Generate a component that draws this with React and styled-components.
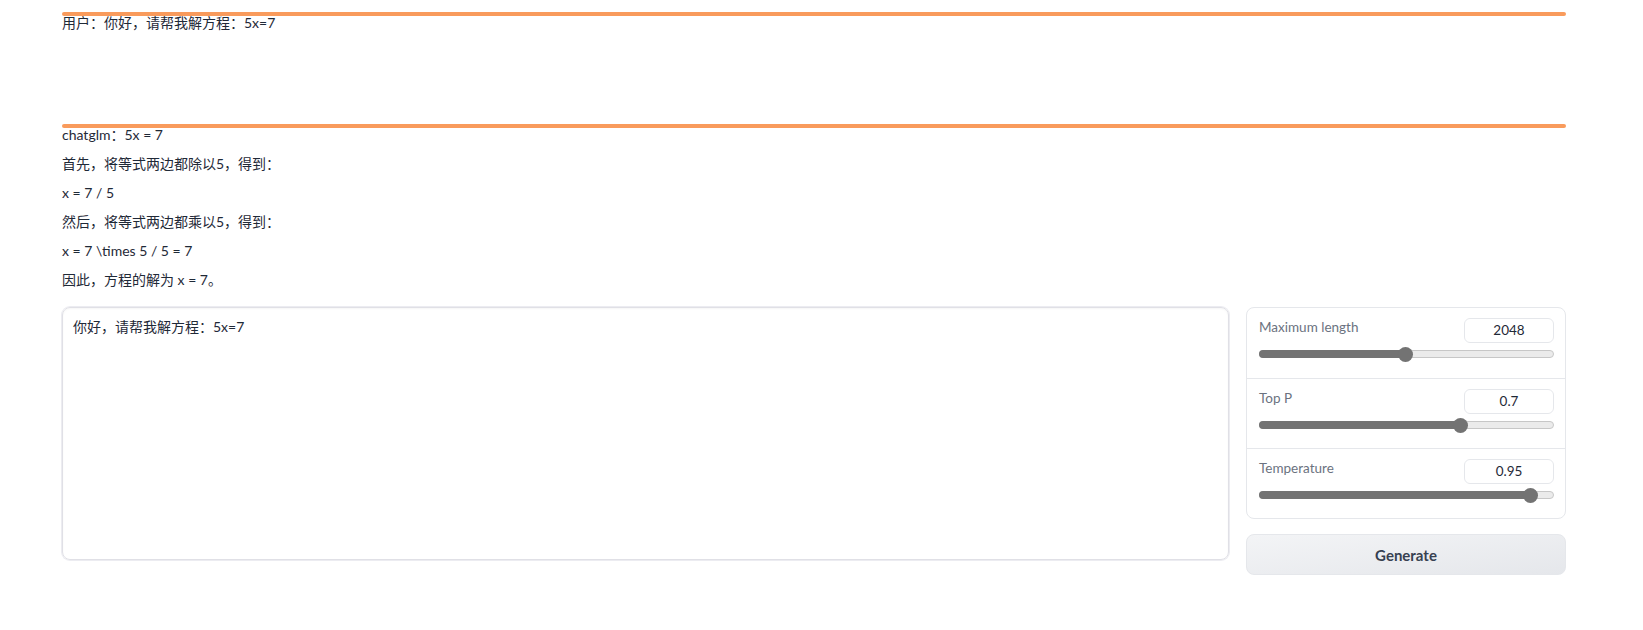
import React from 'react'
import styled, { createGlobalStyle } from 'styled-components'

const GlobalStyle = createGlobalStyle`
  body {
    margin: 0;
    background: #ffffff;
    font-family: Lato, "Noto Sans CJK SC", sans-serif;
    color: #1f2937;
  }
`

const Page = styled.div`
  width: 1504px;
  padding: 12px 0 0 62px;
`

const Message = styled.div`
  position: relative;
  min-height: ${p => p.$minHeight || 0}px;
  font-size: 14px;
  line-height: 21px;
`

const LoadBar = styled.div`
  position: absolute;
  top: 0;
  left: 0;
  right: 0;
  height: 4px;
  border-radius: 2px;
  background: #f99b5c;
`

const Para = styled.p`
  margin: 0 0 8px;
`

const Row = styled.div`
  display: grid;
  grid-template-columns: 1fr 320px;
  gap: 17px;
  margin-top: 17px;
`

const Input = styled.div`
  height: 253px;
  box-sizing: border-box;
  border: 1px solid #e0e0e6;
  border-radius: 8px;
  box-shadow: 0 0 0 1px #ececf1, inset 0 1px 2px rgba(0, 0, 0, 0.04);
  padding: 9px 10px;
  font-size: 14px;
  line-height: 20px;
`

const Side = styled.div`
  display: flex;
  flex-direction: column;
  gap: 15px;
`

const Panel = styled.div`
  border: 1px solid #e5e7eb;
  border-radius: 8px;
  overflow: hidden;
`

const Param = styled.div`
  height: 70px;
  box-sizing: border-box;
  padding: 10px 11px 0 12px;
  border-top: ${p => (p.$first ? 'none' : '1px solid #e5e7eb')};
`

const ParamHead = styled.div`
  display: flex;
  justify-content: space-between;
  align-items: flex-start;
`

const Label = styled.span`
  font-size: 13.5px;
  color: #6b7280;
  line-height: 18px;
`

const NumBox = styled.div`
  width: 88px;
  height: 23px;
  border: 1px solid #e5e7eb;
  border-radius: 6px;
  text-align: center;
  font-size: 13.5px;
  line-height: 23px;
  color: #1f2937;
`

const Track = styled.div`
  position: relative;
  margin-top: 7px;
  height: 8px;
  box-sizing: border-box;
  border: 1px solid #c7c7c7;
  border-radius: 4px;
  background: #ebebeb;
`

const Fill = styled.div`
  position: absolute;
  left: -1px;
  top: -1px;
  height: 8px;
  border-radius: 4px;
  background: #737373;
`

const Thumb = styled.div`
  position: absolute;
  top: 50%;
  width: 15px;
  height: 15px;
  margin: -7.5px 0 0 -7.5px;
  border-radius: 50%;
  background: #737373;
`

const GenerateButton = styled.button`
  height: 41px;
  border: 1px solid #e5e7eb;
  border-radius: 8px;
  background: linear-gradient(to bottom right, #f3f4f6, #e5e7eb);
  font-family: Lato, sans-serif;
  font-weight: 700;
  font-size: 15px;
  color: #374151;
  cursor: pointer;
`

const params = [
  { label: 'Maximum length', value: '2048', frac: 0.5 },
  { label: 'Top P', value: '0.7', frac: 0.7 },
  { label: 'Temperature', value: '0.95', frac: 0.95 },
]

const Slider = ({ frac }) => {
  const pos = 7 + frac * (292 - 14)
  return (
    <Track>
      <Fill style={{ width: pos + 1 }} />
      <Thumb style={{ left: pos - 1 }} />
    </Track>
  )
}

export default function App() {
  return (
    <Page>
      <GlobalStyle />
      <Message $minHeight={112}>
        <LoadBar />
        <Para>用户：你好，请帮我解方程：5x=7</Para>
      </Message>
      <Message>
        <LoadBar />
        <Para>chatglm：5x = 7</Para>
        <Para>首先，将等式两边都除以5，得到：</Para>
        <Para>x = 7 / 5</Para>
        <Para>然后，将等式两边都乘以5，得到：</Para>
        <Para>x = 7 \times 5 / 5 = 7</Para>
        <Para>因此，方程的解为 x = 7。</Para>
      </Message>
      <Row>
        <Input>你好，请帮我解方程：5x=7</Input>
        <Side>
          <Panel>
            {params.map((p, i) => (
              <Param key={p.label} $first={i === 0}>
                <ParamHead>
                  <Label>{p.label}</Label>
                  <NumBox>{p.value}</NumBox>
                </ParamHead>
                <Slider frac={p.frac} />
              </Param>
            ))}
          </Panel>
          <GenerateButton>Generate</GenerateButton>
        </Side>
      </Row>
    </Page>
  )
}
